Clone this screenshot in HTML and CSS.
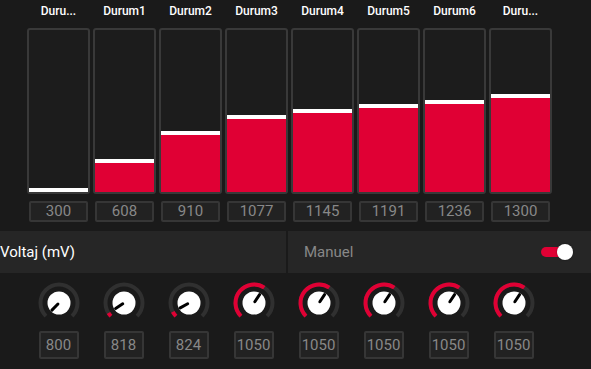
FILE: index.html
```html
<!DOCTYPE html>
<html>
<head>
  <meta charset="utf-8">
  <title>Durum Voltaj</title>
  <link rel="stylesheet" href="styles.css">
</head>
<body>
  <div class="bars">
    <div class="bar-col">
      <div class="bar-label">Duru...</div>
      <div class="bar-box"><div class="bar-fill" style="height:4px"></div></div>
      <div class="bar-value">300</div>
    </div>
    <div class="bar-col">
      <div class="bar-label">Durum1</div>
      <div class="bar-box"><div class="bar-fill" style="height:33px"></div></div>
      <div class="bar-value">608</div>
    </div>
    <div class="bar-col">
      <div class="bar-label">Durum2</div>
      <div class="bar-box"><div class="bar-fill" style="height:61px"></div></div>
      <div class="bar-value">910</div>
    </div>
    <div class="bar-col">
      <div class="bar-label">Durum3</div>
      <div class="bar-box"><div class="bar-fill" style="height:77px"></div></div>
      <div class="bar-value">1077</div>
    </div>
    <div class="bar-col">
      <div class="bar-label">Durum4</div>
      <div class="bar-box"><div class="bar-fill" style="height:83px"></div></div>
      <div class="bar-value">1145</div>
    </div>
    <div class="bar-col">
      <div class="bar-label">Durum5</div>
      <div class="bar-box"><div class="bar-fill" style="height:88px"></div></div>
      <div class="bar-value">1191</div>
    </div>
    <div class="bar-col">
      <div class="bar-label">Durum6</div>
      <div class="bar-box"><div class="bar-fill" style="height:92px"></div></div>
      <div class="bar-value">1236</div>
    </div>
    <div class="bar-col">
      <div class="bar-label">Duru...</div>
      <div class="bar-box"><div class="bar-fill" style="height:98px"></div></div>
      <div class="bar-value">1300</div>
    </div>
  </div>

  <div class="panels">
    <div class="panel panel-left">Voltaj (mV)</div>
    <div class="panel panel-right">
      <span>Manuel</span>
      <div class="switch">
        <div class="switch-track"></div>
        <div class="switch-thumb"></div>
      </div>
    </div>
  </div>

  <div class="knobs">
    <div class="knob-col">
      <svg class="knob" width="44" height="44" viewBox="0 0 44 44">
        <path class="knob-track" d="M8.92 35.08 A18.5 18.5 0 1 1 35.08 35.08"/>
        <circle class="knob-face" cx="22" cy="22" r="11.5"/>
        <line class="knob-pointer" x1="20.94" y1="23.06" x2="14.93" y2="29.07"/>
      </svg>
      <div class="knob-value">800</div>
    </div>
    <div class="knob-col">
      <svg class="knob" width="44" height="44" viewBox="0 0 44 44">
        <path class="knob-track" d="M8.92 35.08 A18.5 18.5 0 1 1 35.08 35.08"/>
        <path class="knob-arc" d="M8.92 35.08 A18.5 18.5 0 0 1 6.46 32.03"/>
        <circle class="knob-face" cx="22" cy="22" r="11.5"/>
        <line class="knob-pointer" x1="20.74" y1="22.81" x2="13.60" y2="27.42"/>
      </svg>
      <div class="knob-value">818</div>
    </div>
    <div class="knob-col">
      <svg class="knob" width="44" height="44" viewBox="0 0 44 44">
        <path class="knob-track" d="M8.92 35.08 A18.5 18.5 0 1 1 35.08 35.08"/>
        <path class="knob-arc" d="M8.92 35.08 A18.5 18.5 0 0 1 5.79 30.91"/>
        <circle class="knob-face" cx="22" cy="22" r="11.5"/>
        <line class="knob-pointer" x1="20.69" y1="22.72" x2="13.24" y2="26.82"/>
      </svg>
      <div class="knob-value">824</div>
    </div>
    <div class="knob-col">
      <svg class="knob" width="44" height="44" viewBox="0 0 44 44">
        <path class="knob-track" d="M8.92 35.08 A18.5 18.5 0 1 1 35.08 35.08"/>
        <path class="knob-arc" d="M8.92 35.08 A18.5 18.5 0 0 1 32.28 6.62"/>
        <circle class="knob-face" cx="22" cy="22" r="11.5"/>
        <line class="knob-pointer" x1="22.83" y1="20.75" x2="27.56" y2="13.69"/>
      </svg>
      <div class="knob-value">1050</div>
    </div>
    <div class="knob-col">
      <svg class="knob" width="44" height="44" viewBox="0 0 44 44">
        <path class="knob-track" d="M8.92 35.08 A18.5 18.5 0 1 1 35.08 35.08"/>
        <path class="knob-arc" d="M8.92 35.08 A18.5 18.5 0 0 1 32.28 6.62"/>
        <circle class="knob-face" cx="22" cy="22" r="11.5"/>
        <line class="knob-pointer" x1="22.83" y1="20.75" x2="27.56" y2="13.69"/>
      </svg>
      <div class="knob-value">1050</div>
    </div>
    <div class="knob-col">
      <svg class="knob" width="44" height="44" viewBox="0 0 44 44">
        <path class="knob-track" d="M8.92 35.08 A18.5 18.5 0 1 1 35.08 35.08"/>
        <path class="knob-arc" d="M8.92 35.08 A18.5 18.5 0 0 1 32.28 6.62"/>
        <circle class="knob-face" cx="22" cy="22" r="11.5"/>
        <line class="knob-pointer" x1="22.83" y1="20.75" x2="27.56" y2="13.69"/>
      </svg>
      <div class="knob-value">1050</div>
    </div>
    <div class="knob-col">
      <svg class="knob" width="44" height="44" viewBox="0 0 44 44">
        <path class="knob-track" d="M8.92 35.08 A18.5 18.5 0 1 1 35.08 35.08"/>
        <path class="knob-arc" d="M8.92 35.08 A18.5 18.5 0 0 1 32.28 6.62"/>
        <circle class="knob-face" cx="22" cy="22" r="11.5"/>
        <line class="knob-pointer" x1="22.83" y1="20.75" x2="27.56" y2="13.69"/>
      </svg>
      <div class="knob-value">1050</div>
    </div>
    <div class="knob-col">
      <svg class="knob" width="44" height="44" viewBox="0 0 44 44">
        <path class="knob-track" d="M8.92 35.08 A18.5 18.5 0 1 1 35.08 35.08"/>
        <path class="knob-arc" d="M8.92 35.08 A18.5 18.5 0 0 1 32.28 6.62"/>
        <circle class="knob-face" cx="22" cy="22" r="11.5"/>
        <line class="knob-pointer" x1="22.83" y1="20.75" x2="27.56" y2="13.69"/>
      </svg>
      <div class="knob-value">1050</div>
    </div>
  </div>
</body>
</html>
```

FILE: styles.css
```css
:root {
  --bg: #1a1a1a;
  --panel: #262626;
  --border: #393939;
  --red: #e00034;
  --muted: #888888;
}
html, body {
  margin: 0;
  background: var(--bg);
  font-family: Roboto, "Liberation Sans", sans-serif;
}
.bars {
  display: flex;
  gap: 3px;
  padding-left: 27px;
}
.bar-col {
  width: 63px;
  display: flex;
  flex-direction: column;
  align-items: center;
}
.bar-label {
  height: 28px;
  line-height: 22px;
  font-size: 12px;
  font-weight: 500;
  color: #fff;
}
.bar-box {
  width: 63px;
  height: 166px;
  box-sizing: border-box;
  border: 2px solid var(--border);
  border-radius: 3px;
  background: #1c1c1c;
  display: flex;
  flex-direction: column;
  justify-content: flex-end;
}
.bar-fill {
  box-sizing: border-box;
  border-top: 4px solid #fff;
  background: var(--red);
}
.bar-value {
  margin-top: 7px;
  width: 59px;
  height: 21px;
  box-sizing: border-box;
  border: 2px solid #363636;
  border-radius: 2px;
  background: #222;
  color: var(--muted);
  font-size: 15px;
  line-height: 17px;
  text-align: center;
}
.panels {
  margin-top: 9px;
  display: flex;
  gap: 2px;
  height: 42px;
}
.panel {
  background: var(--panel);
  display: flex;
  align-items: center;
  font-size: 15px;
}
.panel-left {
  width: 286px;
  color: #fff;
}
.panel-right {
  flex: 1;
  padding: 0 18px 0 16px;
  justify-content: space-between;
  color: var(--muted);
}
.switch {
  position: relative;
  width: 32px;
  height: 16px;
}
.switch-track {
  margin-top: 3px;
  width: 29px;
  height: 10px;
  border-radius: 5px;
  background: var(--red);
}
.switch-thumb {
  position: absolute;
  right: 0;
  top: 0;
  width: 16px;
  height: 16px;
  border-radius: 50%;
  background: #fff;
  box-shadow: 0 0 2px rgba(0, 0, 0, 0.5);
}
.knobs {
  margin-top: 8px;
  display: flex;
  padding-left: 26px;
}
.knob-col {
  width: 65px;
  display: flex;
  flex-direction: column;
  align-items: center;
  gap: 6px;
}
.knob {
  display: block;
}
.knob-track {
  fill: none;
  stroke: #303030;
  stroke-width: 4;
}
.knob-arc {
  fill: none;
  stroke: var(--red);
  stroke-width: 4;
}
.knob-face {
  fill: #fff;
}
.knob-pointer {
  stroke: #000;
  stroke-width: 3;
  stroke-linecap: round;
}
.knob-value {
  width: 40px;
  height: 28px;
  box-sizing: border-box;
  border: 2px solid #363636;
  border-radius: 2px;
  background: #222;
  color: var(--muted);
  font-size: 15px;
  line-height: 24px;
  text-align: center;
}
```
